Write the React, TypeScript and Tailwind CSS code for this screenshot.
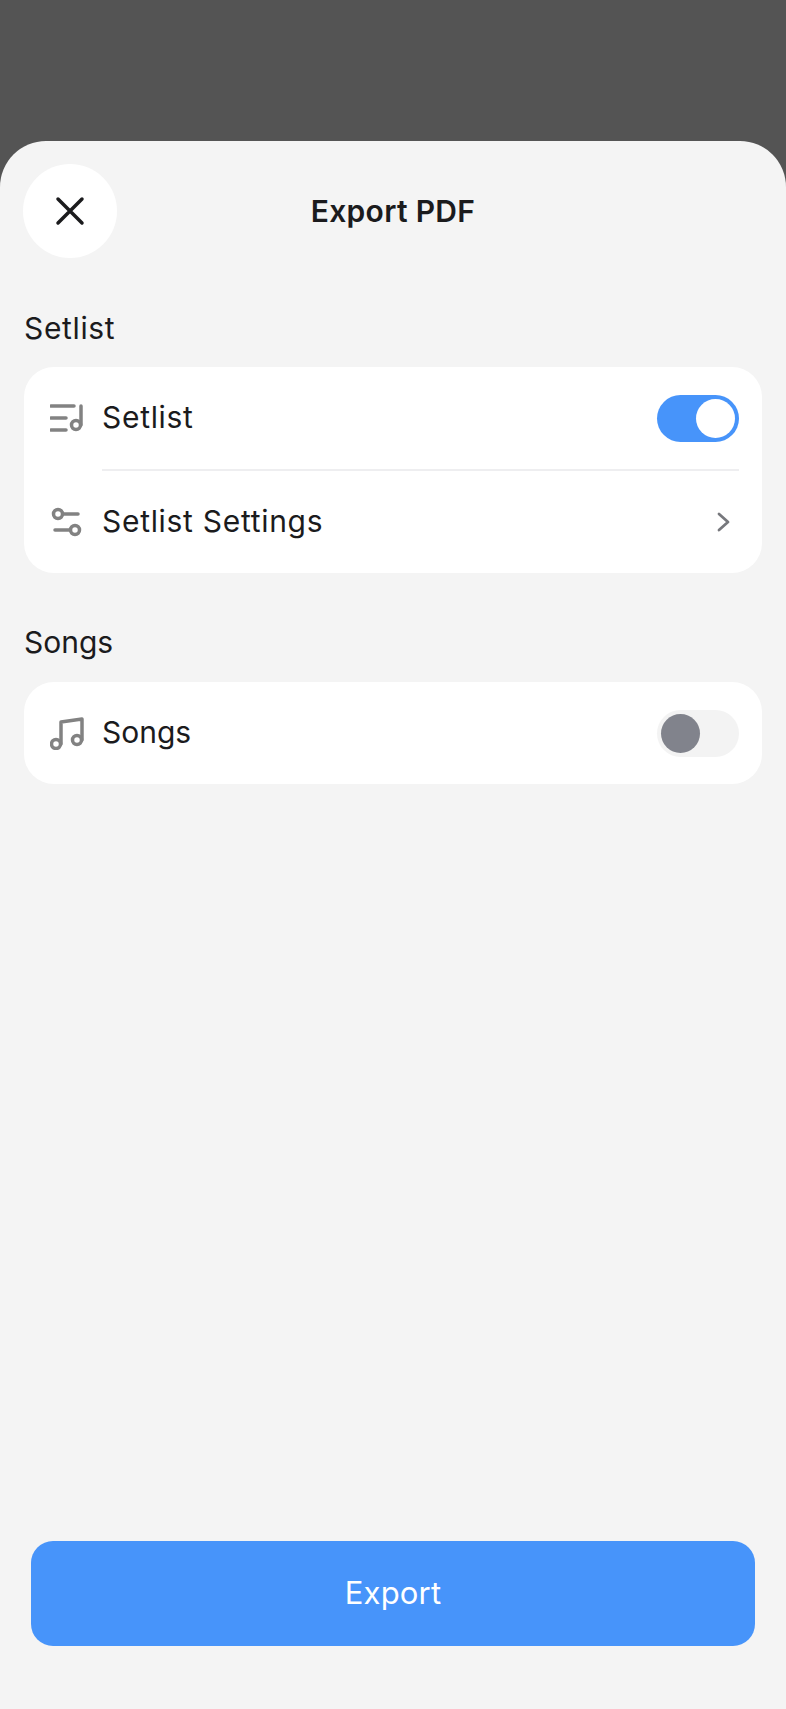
import React from "react";

function Toggle({ on }: { on: boolean }) {
  return on ? (
    <div className="flex h-[47px] w-[82px] items-center justify-end rounded-full bg-[#4794fa] pr-[4px]">
      <div className="h-[39px] w-[39px] rounded-full bg-white" />
    </div>
  ) : (
    <div className="flex h-[47px] w-[82px] items-center justify-start rounded-full bg-[#f3f3f3] pl-[4px]">
      <div className="h-[39px] w-[39px] rounded-full bg-[#81838c]" />
    </div>
  );
}

export default function App() {
  return (
    <div className="flex h-[1709px] w-[786px] flex-col overflow-hidden bg-[#545454] font-['Inter',sans-serif] text-[#1b1b1d]">
      <div className="h-[141px] shrink-0" />
      <div className="flex flex-1 flex-col rounded-t-[46px] bg-[#f4f4f4] px-[24px]">
        <div className="relative mt-[23px] flex h-[94px] items-center justify-center">
          <div className="absolute left-[-1px] top-0 flex h-[94px] w-[94px] items-center justify-center rounded-full bg-white">
            <svg width="30" height="30" viewBox="0 0 30 30" fill="none" stroke="#1b1b1d" strokeWidth="3.5" strokeLinecap="round">
              <path d="M3 3L27 27M27 3L3 27" />
            </svg>
          </div>
          <span className="text-[30px] font-semibold tracking-[0.3px]">Export PDF</span>
        </div>
        <div className="mt-[52px] text-[30px] leading-[36px] tracking-[0.65px]">Setlist</div>
        <div className="mt-[21px] rounded-[30px] bg-white">
          <div className="flex h-[102px] items-center pl-[26px] pr-[23px]">
            <svg width="33" height="30" viewBox="1 0 33 30" fill="none" stroke="#828282" strokeWidth="3.5" strokeLinecap="round" className="shrink-0">
              <path d="M2 3H25M2 15H17M2 27H17" />
              <circle cx="27" cy="22" r="4.5" />
              <path d="M32 22V3" />
            </svg>
            <span className="ml-[19px] flex-1 pb-[2px] text-[30px] tracking-[0.7px]">Setlist</span>
            <Toggle on />
          </div>
          <div className="ml-[78px] mr-[23px] h-[2px] bg-[#eeeef0]" />
          <div className="flex h-[102px] items-center pl-[26px] pr-[23px]">
            <svg width="32" height="30" viewBox="0 0 32 30" fill="none" stroke="#828282" strokeWidth="3.5" strokeLinecap="round" className="shrink-0">
              <circle cx="8" cy="7" r="4.5" />
              <path d="M13 7H28" />
              <circle cx="25" cy="23" r="4.5" />
              <path d="M5 23H20" />
            </svg>
            <span className="ml-[20px] flex-1 pb-[2px] text-[30px] tracking-[0.7px]">Setlist Settings</span>
            <svg width="14" height="20" viewBox="0 0 14 20" fill="none" stroke="#77787d" strokeWidth="2.8" strokeLinecap="round" strokeLinejoin="round" className="mr-[8px]">
              <path d="M2 2L11 10L2 18" />
            </svg>
          </div>
        </div>
        <div className="mt-[52px] pb-0 text-[30px] leading-[34px] tracking-[0px]">Songs</div>
        <div className="mt-[23px] flex h-[102px] items-center rounded-[30px] bg-white pl-[26px] pr-[23px]">
          <svg width="34" height="34" viewBox="0 -1 34 34" fill="none" stroke="#828282" strokeWidth="3.5" strokeLinecap="round" strokeLinejoin="round" className="shrink-0">
            <circle cx="6" cy="27" r="4.5" />
            <circle cx="27" cy="23" r="4.5" />
            <path d="M11 27V5L32 2V23" />
          </svg>
          <span className="ml-[18px] flex-1 pb-[2px] text-[30px] tracking-[0px]">Songs</span>
          <Toggle on={false} />
        </div>
        <div className="flex-1" />
        <div className="mb-[63px] ml-[7px] mr-[7px] flex h-[105px] items-center justify-center rounded-[22px] bg-[#4794fa] text-[31px] tracking-[0.2px] text-white">
          Export
        </div>
      </div>
    </div>
  );
}
